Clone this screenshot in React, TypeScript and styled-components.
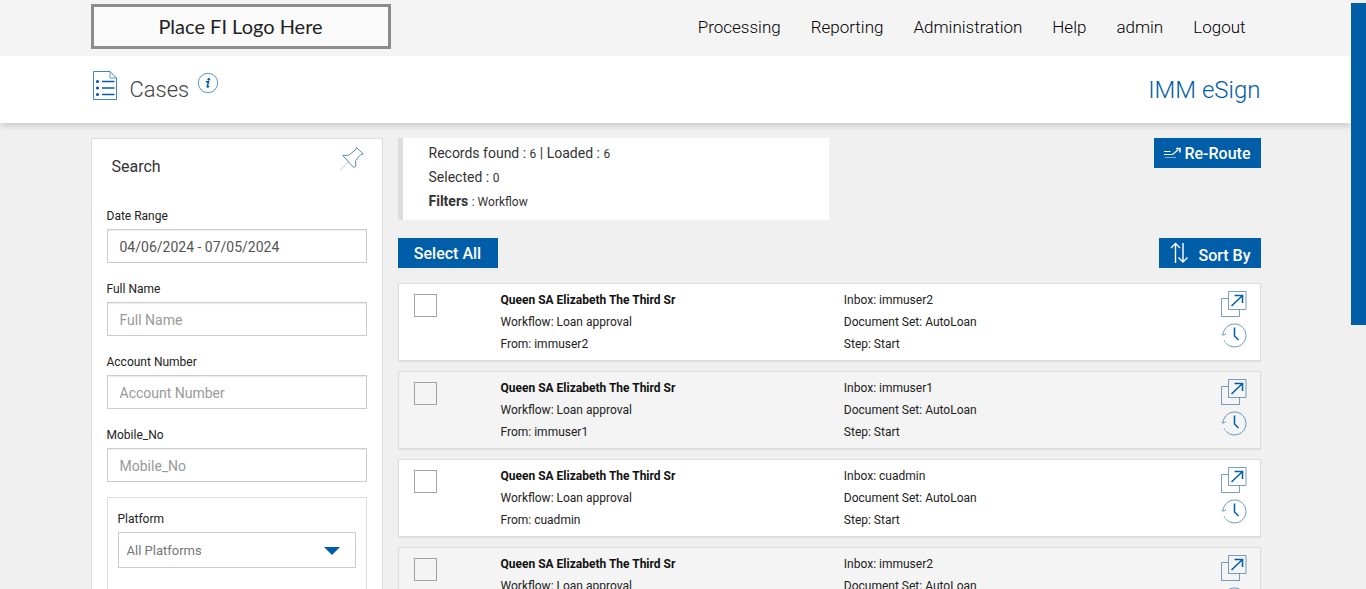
import React from "react";
import styled, { createGlobalStyle } from "styled-components";

const blue = "#005da8";

const GlobalStyle = createGlobalStyle`
  *, *::before, *::after { box-sizing: border-box; }
  body {
    margin: 0;
    background: #f0f0f0;
    color: #222;
    font: 400 12px/22px Roboto, "Liberation Sans", sans-serif;
  }
  button, input, select { font: inherit; border-radius: 0; }
`;

const Page = styled.div`
  display: flex;
  height: 100vh;
  overflow: hidden;
`;

const Content = styled.div`
  flex: 1;
  min-width: 0;
  overflow: hidden;
`;

const ScrollTrack = styled.div`
  flex: 0 0 15px;
  padding-top: 3px;
  background: #f0f0f0;
`;

const ScrollThumb = styled.div`
  height: 55%;
  background: ${blue};
`;

const Container = styled.div`
  display: flex;
  max-width: 1170px;
  margin: 0 auto;
`;

const TopBar = styled.header`
  background: #f4f4f4;
  ${Container} {
    height: 56px;
    align-items: flex-start;
    justify-content: space-between;
    padding-top: 4px;
  }
`;

const Logo = styled.div`
  width: 300px;
  height: 45px;
  border: 3px solid #8c8c8c;
  background: #fafafa;
  color: #222;
  font: 400 20px/38px Lato, sans-serif;
  text-align: center;
`;

const Nav = styled.nav`
  display: flex;
  gap: 30px;
  padding: 12px 15px 0 0;
`;

const NavLink = styled.a`
  color: #000;
  font-size: 17px;
  font-weight: 300;
  text-decoration: none;
`;

const TitleBar = styled.section`
  position: relative;
  background: #fff;
  box-shadow: 0 4px 6px -1px rgba(0, 0, 0, 0.16);
  ${Container} {
    height: 67px;
    align-items: flex-start;
    justify-content: space-between;
  }
`;

const TitleGroup = styled.div`
  display: flex;
  align-items: flex-start;
  padding: 14px 0 0 2px;
`;

const Title = styled.h1`
  margin: 5px 8px 0 12px;
  color: #444;
  font-size: 22px;
  font-weight: 300;
  line-height: 30px;
`;

const Product = styled.div`
  padding-top: 18px;
  color: ${blue};
  font-size: 24px;
  font-weight: 300;
  line-height: 32px;
`;

const IconButton = styled.button`
  display: block;
  padding: 0;
  border: 0;
  background: none;
  cursor: pointer;
  svg { display: block; }
`;

const Main = styled(Container)`
  gap: 15px;
  align-items: flex-start;
  padding-top: 15px;
`;

const SearchPanel = styled.aside`
  flex: 0 0 292px;
  padding: 0 15px 15px;
  border: 1px solid #ddd;
  background: #fff;
`;

const PanelHead = styled.div`
  display: flex;
  justify-content: space-between;
  height: 67px;
  padding: 7px 2px 0 5px;
`;

const PanelTitle = styled.h2`
  margin: 10px 0 0;
  color: #333;
  font-size: 16px;
  font-weight: 400;
  line-height: 22px;
`;

const Field = styled.div`
  display: flex;
  flex-direction: column;
  margin-bottom: 16px;
`;

const Label = styled.label`
  color: #222;
  line-height: 20px;
  margin-bottom: 3px;
`;

const TextBox = styled.input`
  width: 100%;
  height: 34px;
  padding: 2px 12px 0;
  border: 1px solid #ccc;
  background: #fff;
  box-shadow: inset 0 1px 1px rgba(0, 0, 0, 0.08);
  color: #555;
  font-size: 14px;
  &::placeholder { color: #999; opacity: 1; }
`;

const Group = styled.div`
  height: 260px;
  margin-top: -1px;
  padding: 11px 10px;
  border: 1px solid #ddd;
`;

const SelectWrap = styled.div`
  display: grid;
  align-items: center;
  > * { grid-area: 1 / 1; }
  svg { justify-self: end; margin: 2px 16px 0 0; pointer-events: none; }
`;

const Select = styled.select`
  appearance: none;
  width: 100%;
  height: 36px;
  padding: 2px 8px 0;
  border: 1px solid #ccc;
  background: #fff;
  color: #777;
  font-size: 13px;
`;

const Results = styled.main`
  flex: 1;
  min-width: 0;
`;

const ResultsHead = styled.div`
  display: flex;
  align-items: flex-start;
  justify-content: space-between;
`;

const Summary = styled.div`
  width: 50%;
  height: 82px;
  padding: 3px 26px;
  border-left: 5px solid #ddd;
  background: #fff;
  color: #333;
`;

const SummaryLine = styled.div`
  height: 24px;
  line-height: 24px;
  white-space: pre;
`;

const SummaryLabel = styled.span<{ $bold?: boolean }>`
  font-size: 14px;
  font-weight: ${(p) => (p.$bold ? 700 : 400)};
`;

const Toolbar = styled.div`
  display: flex;
  justify-content: space-between;
  padding: 18px 0 15px;
`;

const ActionButton = styled.button<{ $width: number }>`
  display: flex;
  align-items: center;
  justify-content: space-between;
  width: ${(p) => p.$width}px;
  height: 30px;
  padding: 0 10px;
  border: 0;
  background: ${blue};
  color: #fff;
  font-size: 16px;
  font-weight: 500;
  white-space: nowrap;
  cursor: pointer;
`;

const CenteredButton = styled(ActionButton)`
  justify-content: center;
`;

const ButtonLabel = styled.span<{ $low?: boolean }>`
  padding-top: ${(p) => (p.$low ? 6 : 2)}px;
`;

const CaseList = styled.ul`
  display: flex;
  flex-direction: column;
  gap: 10px;
  margin: 0;
  padding: 0;
  list-style: none;
`;

const CaseCard = styled.li`
  display: grid;
  grid-template-columns: 87px 10fr 11fr 26px;
  height: 78px;
  padding: 5px 12px 0 15px;
  border: 1px solid #ddd;
  background: #fff;
  box-shadow: 0 1px 1px rgba(0, 0, 0, 0.06);
  &:nth-child(even) { background: #f4f4f4; }
`;

const Check = styled.input`
  appearance: none;
  width: 23px;
  height: 23px;
  margin: 5px 0 0;
  border: 1px solid #a2a2a2;
  background: transparent;
  &:checked { background: ${blue}; }
`;

const Lines = styled.div`
  display: flex;
  flex-direction: column;
`;

const CaseName = styled.strong`
  color: #111;
  font-weight: 700;
`;

const CaseActions = styled.div`
  display: flex;
  flex-direction: column;
  gap: 6px;
  padding-top: 1px;
`;

const CasesIcon = () => (
  <svg width="25" height="31" viewBox="0 0 25 31" fill="none" stroke={blue}>
    <path d="M.5 1.500h16.500l6.500 6.500v21.500H.5z" strokeOpacity=".75" />
    <path d="M17 1.500v6.500h6.500" strokeOpacity=".6" />
    <path d="M9 11.500h12.500M9 18h12.500M9 24.500h12.500" strokeWidth="1.500" />
    <g fill={blue} stroke="none">
      <circle cx="4.500" cy="11.500" r="1.600" />
      <circle cx="4.500" cy="18" r="1.600" />
      <circle cx="4.500" cy="24.500" r="1.600" />
    </g>
  </svg>
);

const InfoIcon = () => (
  <svg width="22" height="26" viewBox="0 0 22 26">
    <circle cx="11" cy="13" r="9.700" fill="none" stroke={blue} strokeOpacity=".65" />
    <circle cx="11.800" cy="9.200" r="1.300" fill={blue} />
    <path d="M8.800 12q1-.6 2.800-.5l-1.400 5.100q-.1 1 1.900-.5" fill="none" stroke={blue} strokeWidth="1.500" />
  </svg>
);

const PinIcon = () => (
  <svg width="26" height="26" viewBox="0 0 26 26" fill="none" stroke="#2f6f9f" strokeOpacity=".8">
    <path d="M17.500 1.500l6.800 6.500-2.400.4-5.300 6.100.2 5.700-2.300 1.200L5.200 11l-1.400-1.500 6-.4 6.500-5z" />
    <path d="M9.500 15.500L1 24.500" strokeOpacity=".35" />
  </svg>
);

const RerouteIcon = () => (
  <svg width="18" height="12" viewBox="0 0 18 12" fill="none" stroke="#fff">
    <path d="M0 4.500h6.500" />
    <path d="M0 7.500h8.500l6-5" strokeWidth="1.200" />
    <path d="M1 10.500h11" strokeOpacity=".5" />
    <path d="M12 1.500h4v4" strokeWidth="1.500" />
  </svg>
);

const SortIcon = () => (
  <svg width="20" height="24" viewBox="0 0 20 24" fill="none" stroke="#fff" strokeWidth="1.400">
    <path d="M6.500 22V2.500M2 7l4.500-4.500L11 7M14 2v19M9.500 16.500l4.500 4.500 4.500-4.500" />
  </svg>
);

const OpenIcon = () => (
  <svg width="26" height="27" viewBox="0 0 26 27" fill="none" stroke="#1f5f9f">
    <path d="M7.500 8.500h-7v18h18v-7M7.500 1.500h17.500v18h-17.500z" strokeOpacity=".6" />
    <path d="M10.500 16L21.500 5.500M13.500 5.500h8v7.500" stroke={blue} strokeWidth="1.500" />
  </svg>
);

const HistoryIcon = () => (
  <svg width="26" height="26" viewBox="0 0 26 26" fill="none" stroke="#1f5f9f">
    <path d="M2 12a11.500 11.500 0 1 1 4.500 9.600" strokeOpacity=".65" />
    <path d="M6.500 21.600Q4 19.500 2.500 16.500" strokeOpacity=".65" strokeDasharray="2 1.500" />
    <path d="M0 10.500l2 2 3-2" strokeOpacity=".5" />
    <path d="M13.500 4.500v8.500l4 4" stroke={blue} strokeWidth="1.500" />
  </svg>
);

const navItems = ["Processing", "Reporting", "Administration", "Help", "admin", "Logout"];

const fields = [
  { id: "dateRange", label: "Date Range", value: "04/06/2024 - 07/05/2024" },
  { id: "fullName", label: "Full Name" },
  { id: "accountNumber", label: "Account Number" },
  { id: "mobileNo", label: "Mobile_No" },
];

const cases = ["immuser2", "immuser1", "cuadmin", "immuser2"];

export default function App() {
  return (
    <>
      <GlobalStyle />
      <Page>
        <Content>
          <TopBar>
            <Container>
              <Logo>Place FI Logo Here</Logo>
              <Nav>
                {navItems.map((item) => (
                  <NavLink href="#" key={item}>{item}</NavLink>
                ))}
              </Nav>
            </Container>
          </TopBar>
          <TitleBar>
            <Container>
              <TitleGroup>
                <CasesIcon />
                <Title>Cases</Title>
                <IconButton aria-label="Information"><InfoIcon /></IconButton>
              </TitleGroup>
              <Product>IMM eSign</Product>
            </Container>
          </TitleBar>
          <Main>
            <SearchPanel>
              <PanelHead>
                <PanelTitle>Search</PanelTitle>
                <div>
                  <IconButton aria-label="Pin search panel"><PinIcon /></IconButton>
                </div>
              </PanelHead>
              {fields.map((f) => (
                <Field key={f.id}>
                  <Label htmlFor={f.id}>{f.label}</Label>
                  <TextBox id={f.id} type="text" defaultValue={f.value} placeholder={f.label} />
                </Field>
              ))}
              <Group>
                <Field>
                  <Label htmlFor="platform">Platform</Label>
                  <SelectWrap>
                    <Select id="platform">
                      <option>All Platforms</option>
                    </Select>
                    <svg width="16" height="8" viewBox="0 0 16 8">
                      <path d="M0 0h16L8 8z" fill={blue} />
                    </svg>
                  </SelectWrap>
                </Field>
              </Group>
            </SearchPanel>
            <Results>
              <ResultsHead>
                <Summary>
                  <SummaryLine>
                    <SummaryLabel>Records found : </SummaryLabel>6
                    <SummaryLabel> | Loaded : </SummaryLabel>6
                  </SummaryLine>
                  <SummaryLine><SummaryLabel>Selected : </SummaryLabel>0</SummaryLine>
                  <SummaryLine><SummaryLabel $bold>Filters </SummaryLabel>: Workflow</SummaryLine>
                </Summary>
                <ActionButton $width={107}>
                  <RerouteIcon />
                  <ButtonLabel>Re-Route</ButtonLabel>
                </ActionButton>
              </ResultsHead>
              <Toolbar>
                <CenteredButton $width={100}>
                  <ButtonLabel>Select All</ButtonLabel>
                </CenteredButton>
                <ActionButton $width={102}>
                  <SortIcon />
                  <ButtonLabel $low>Sort By</ButtonLabel>
                </ActionButton>
              </Toolbar>
              <CaseList>
                {cases.map((user, i) => (
                  <CaseCard key={i}>
                    <Check type="checkbox" aria-label={`Select case ${i + 1}`} />
                    <Lines>
                      <CaseName>Queen SA Elizabeth The Third Sr</CaseName>
                      <span>Workflow: Loan approval</span>
                      <span>From: {user}</span>
                    </Lines>
                    <Lines>
                      <span>Inbox: {user}</span>
                      <span>Document Set: AutoLoan</span>
                      <span>Step: Start</span>
                    </Lines>
                    <CaseActions>
                      <IconButton aria-label="Open case"><OpenIcon /></IconButton>
                      <IconButton aria-label="Case history"><HistoryIcon /></IconButton>
                    </CaseActions>
                  </CaseCard>
                ))}
              </CaseList>
            </Results>
          </Main>
        </Content>
        <ScrollTrack><ScrollThumb /></ScrollTrack>
      </Page>
    </>
  );
}
